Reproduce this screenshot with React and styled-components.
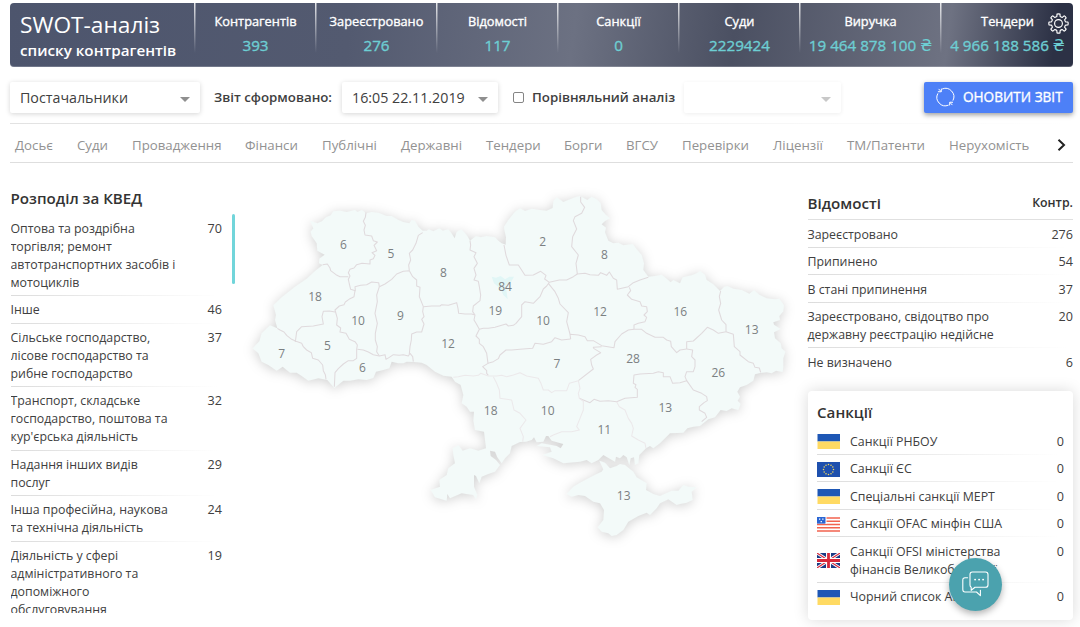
import React from "react";
import styled, { createGlobalStyle, css } from "styled-components";

const GlobalStyle = createGlobalStyle`
  *, *::before, *::after { box-sizing: border-box; }
  html, body { margin: 0; height: 100%; overflow: hidden; background: #fff; }
  body {
    font-family: "Open Sans", "Noto Sans", sans-serif;
    font-size: 12.35px;
    line-height: 18px;
    color: #404040;
  }
`;

const Page = styled.div`
  width: 1080px;
  height: 627px;
  padding: 3px 7px 0 10px;
  overflow: hidden;
  position: relative;
`;

/* Open Sans has no 500 cut installed, so a hairline stroke thickens the regular one. */
const mediumWeight = css`
  font-weight: 400;
  -webkit-text-stroke: 0.35px currentColor;
`;

const Header = styled.header`
  position: relative;
  display: flex;
  width: 1063px;
  height: 64px;
  border-radius: 4px;
  color: #fff;
  background: linear-gradient(97deg, #4d556d 0%, #535a70 32%, #6c7182 53%, #4b5062 68%, #6e7282 88%, #2c3145 98%);
  box-shadow: inset 0 -1px 0 rgba(255, 255, 255, 0.2);
`;

const HeaderTitle = styled.div`
  width: 184px;
  padding: 8px 0 0 10px;
  white-space: nowrap;
`;

const Title = styled.h1`
  margin: 0;
  font-size: 22.7px;
  line-height: 28px;
  font-weight: 400;
`;

const Subtitle = styled.div`
  font-size: 15.2px;
  line-height: 22px;
  font-weight: 600;
`;

const Stat = styled.div`
  width: ${(p) => p.$width}px;
  padding: 9px 0 0 2px;
  text-align: center;
  white-space: nowrap;
  background: linear-gradient(180deg, rgba(255, 255, 255, 0.85), rgba(255, 255, 255, 0)) left top / 1.5px 50px no-repeat;
`;

const StatLabel = styled.div`
  font-size: 12.8px;
  line-height: 19px;
  ${mediumWeight}
`;

const StatValue = styled.div`
  margin-top: 3px;
  font-size: 15.2px;
  line-height: 22px;
  color: #6dced3;
  ${mediumWeight}
`;

const Currency = styled.span`
  font: 400 15.5px/20px "DejaVu Sans", sans-serif;
  -webkit-text-stroke: 0;
`;

const SettingsButton = styled.button`
  position: absolute;
  right: 4px;
  top: 10px;
  width: 21px;
  height: 21px;
  padding: 0;
  border: 0;
  background: none;
  svg { display: block; }
`;

const Toolbar = styled.div`
  display: flex;
  align-items: center;
  width: 1063px;
  height: 57px;
  padding-top: 3px;
  background: linear-gradient(90deg, #e2e2e2, #fff) left bottom / 100% 1px no-repeat;
`;

const Select = styled.div`
  display: flex;
  align-items: center;
  justify-content: space-between;
  width: ${(p) => p.$width}px;
  height: 31px;
  padding: 2px 10px 0 10px;
  border-radius: 2px;
  background: #fff;
  font-size: 14.25px;
  box-shadow: ${(p) => (p.$muted ? "0 1px 4px rgba(0,0,0,.07)" : "0 1px 5px rgba(0,0,0,.17)")};
`;

const Caret = styled.span`
  width: 0;
  height: 0;
  margin-top: 2px;
  border: 5px solid transparent;
  border-top-color: ${(p) => (p.$muted ? "#c8c8c8" : "#8f8f8f")};
  border-bottom: 0;
`;

const ToolbarLabel = styled.span`
  font-weight: 600;
  font-size: 13.3px;
  white-space: nowrap;
  width: ${(p) => p.$width}px;
  margin-left: ${(p) => p.$gap}px;
`;

const Checkbox = styled.span`
  width: 11px;
  height: 11px;
  margin-left: 15px;
  border: 1px solid #858585;
  border-radius: 2px;
`;

const RefreshButton = styled.button`
  display: flex;
  align-items: center;
  gap: 8px;
  width: 149px;
  height: 31px;
  margin-left: auto;
  padding: 0 0 0 12px;
  border: 0;
  border-radius: 2px;
  color: #fff;
  background: #4d80f7;
  font: 400 13.6px/20px "Open Sans", sans-serif;
  ${mediumWeight}
  white-space: nowrap;
  box-shadow: 0 2px 5px rgba(0, 0, 0, 0.38);
`;

const Tabs = styled.nav`
  display: flex;
  align-items: center;
  width: 1063px;
  height: 39px;
  padding: 4px 7px 0 5px;
  border-bottom: 1px solid #dedede;
  color: #929292;
  font-size: 13.25px;
  white-space: nowrap;
`;

const Tab = styled.span`
  width: ${(p) => p.$width}px;
`;

const NextTabs = styled.span`
  margin-left: auto;
  height: 12px;
  svg { display: block; }
`;

const Content = styled.main`
  display: grid;
  grid-template-columns: 230px 567.5px 265.5px;
  height: 464px;
`;

const PanelTitle = styled.h2`
  margin: 0;
  font-size: 15.15px;
  line-height: 20px;
  font-weight: 600;
  color: #333;
`;

const Kved = styled.section`
  padding: 25px 0 0 0.5px;
`;

const KvedScroll = styled.div`
  display: flex;
  height: 398.5px;
  margin-top: 6px;
  overflow: hidden;
`;

const KvedList = styled.div`
  width: 221px;
`;

const Scrollbar = styled.div`
  width: 3px;
  height: 69.5px;
  border-radius: 2px;
  background: #71d5da;
`;

const rowLine = css`
  background: linear-gradient(90deg, #dcdcdc, #fff 98%) left bottom / 100% 1px no-repeat;
`;

const KvedRow = styled.div`
  display: flex;
  justify-content: space-between;
  width: 211.5px;
  padding: ${(p) => (p.$first ? "5.6px" : "5.1px")} 0 4.45px;
  ${rowLine}
`;

const RowName = styled.span`
  white-space: pre-line;
`;

const Count = styled.span`
  font-size: 12.6px;
`;

const MapArea = styled.section`
  padding-top: 17px;
  svg { display: block; overflow: visible; }
`;

const Region = styled.path`
  fill: #f3faf9;
`;

const Border = styled.path`
  fill: none;
  stroke: ${(p) => (p.$faint ? "#ece9eb" : "#e0dadd")};
  stroke-width: 3.2;
  stroke-linejoin: round;
`;

const MapLabel = styled.text`
  font: 36px "Open Sans", sans-serif;
  fill: #7b8082;
  text-anchor: middle;
`;

const Side = styled.aside`
  padding-top: 25.5px;
`;

const InfoHead = styled.div`
  display: flex;
  align-items: center;
  justify-content: space-between;
  height: 31.5px;
  padding-bottom: 2px;
  border-bottom: 1px solid #e0e0e0;
  font-weight: 600;
  color: #333;
`;

const InfoRows = styled.div`
  padding-top: 0.5px;
`;

const InfoRow = styled.div`
  display: flex;
  justify-content: space-between;
  padding: 5.1px 0 4.4px;
  ${(p) => !p.$last && rowLine}
`;

const SanctionsCard = styled.div`
  height: 229px;
  margin-top: 15.5px;
  padding: 10.4px 9px 0 9.5px;
  border-radius: 4px;
  background: #fff;
  box-shadow: 0 0 15px rgba(0, 0, 0, 0.15);
`;

const SanctionRows = styled.div`
  margin-top: 5.6px;
`;

const SanctionRow = styled.div`
  display: flex;
  align-items: center;
  padding: 5.35px 0 4.15px;
  ${(p) => !p.$last && rowLine}
  svg { display: block; flex: none; }
`;

const SanctionName = styled.span`
  flex: 1;
  margin-left: 10px;
  white-space: pre-line;
`;

const SanctionCount = styled(Count)`
  align-self: flex-start;
`;

const ChatButton = styled.button`
  position: absolute;
  left: 949px;
  top: 558px;
  display: flex;
  align-items: center;
  justify-content: center;
  width: 53px;
  height: 53px;
  padding: 0 0 2px;
  border: 0;
  border-radius: 50%;
  background: #4ba2ae;
  box-shadow: 0 3px 7px rgba(0, 0, 0, 0.3);
`;

const stats = [
  ["Контрагентів", "393", 121],
  ["Зареєстровано", "276", 121],
  ["Відомості", "117", 121],
  ["Санкції", "0", 121],
  ["Суди", "2229424", 121],
  ["Виручка", "19 464 878 100", 141, true],
  ["Тендери", "4 966 188 586", 133, true],
];

const tabs = [
  ["Досьє", 62], ["Суди", 55], ["Провадження", 113], ["Фінанси", 77], ["Публічні", 79],
  ["Державні", 85], ["Тендери", 78], ["Борги", 62], ["ВГСУ", 56], ["Перевірки", 91],
  ["Ліцензії", 74], ["ТМ/Патенти", 102], ["Нерухомість", 84],
];

const kved = [
  ["Оптова та роздрібна\nторгівля; ремонт\nавтотранспортних засобів і\nмотоциклів", 70],
  ["Інше", 46],
  ["Сільське господарство,\nлісове господарство та\nрибне господарство", 37],
  ["Транспорт, складське\nгосподарство, поштова та\nкур'єрська діяльність", 32],
  ["Надання інших видів\nпослуг", 29],
  ["Інша професійна, наукова\nта технічна діяльність", 24],
  ["Діяльність у сфері\nадміністративного та\nдопоміжного\nобслуговування", 19],
];

const info = [
  ["Зареєстровано", 276],
  ["Припинено", 54],
  ["В стані припинення", 37],
  ["Зареєстровано, свідоцтво про\nдержавну реєстрацію недійсне", 20],
  ["Не визначено", 6],
];

const sanctions = [
  ["ua", "Санкції РНБОУ"],
  ["eu", "Санкції ЄС"],
  ["ua", "Спеціальні санкції МЕРТ"],
  ["us", "Санкції OFAC мінфін США"],
  ["gb", "Санкції OFSI міністерства\nфінансів Великобританії"],
  ["ua", "Чорний список АМКУ"],
];

/* Map geometry: three units per pixel. */
const mainland =
  "M210 122 232 130 246 124 258 112 272 106 280 94 300 92 320 96 345 90 352 96 366 90 378 100 395 96 415 98 440 108 455 108 475 120 490 126 508 130 515 120 525 122 535 140 548 152 560 152 566 148 580 154 598 145 608 152 625 148 636 162 644 175 650 156 664 148 672 156 682 168 690 182 708 168 722 172 740 168 765 172 775 182 785 190 797 194 798 172 793 150 792 140 805 120 825 95 840 85 855 93 875 86 900 90 920 92 938 84 940 64 950 52 970 66 990 58 1005 52 1020 48 1042 60 1055 50 1070 58 1082 70 1085 90 1098 105 1110 115 1095 123 1085 133 1098 143 1095 157 1105 182 1120 190 1135 188 1150 196 1178 192 1192 210 1205 225 1212 250 1210 270 1225 290 1245 288 1265 284 1280 296 1292 307 1300 300 1320 310 1328 292 1355 286 1370 280 1380 273 1395 284 1400 300 1420 313 1440 333 1452 321 1462 318 1480 326 1505 330 1528 341 1542 331 1558 344 1580 355 1605 358 1618 356 1632 376 1630 394 1618 408 1620 420 1600 427 1602 434 1622 447 1602 457 1605 475 1622 490 1625 505 1636 515 1630 535 1630 560 1628 576 1608 572 1595 580 1580 577 1560 579 1545 583 1540 602 1520 615 1500 622 1492 635 1500 650 1493 662 1502 672 1495 690 1475 685 1460 693 1442 690 1425 712 1405 718 1380 738 1360 740 1342 745 1330 758 1290 760 1260 790 1240 805 1230 798 1218 805 1198 825 1195 850 1185 855 1182 832 1172 835 1168 855 1160 832 1150 825 1140 835 1128 830 1125 845 1112 838 1090 825 1075 840 1055 850 1040 840 1020 845 970 850 940 835 908 825 935 815 930 802 890 798 905 790 950 798 962 805 970 792 935 782 925 768 918 768 910 785 890 787 882 772 875 780 858 785 840 786 815 798 810 820 795 835 785 850 772 832 765 815 750 812 752 828 768 840 780 855 765 875 745 882 725 890 718 910 708 888 702 885 702 920 712 945 708 958 700 945 665 940 630 955 622 942 620 962 585 952 572 930 600 920 598 900 620 885 625 865 645 850 640 825 638 805 655 795 668 812 690 805 715 812 738 805 735 780 732 755 705 750 700 722 702 695 690 695 680 680 665 670 670 645 662 615 645 605 635 590 610 587 585 575 560 555 545 548 522 546 500 545 490 550 475 550 455 545 448 565 430 570 408 575 400 594 380 600 355 598 330 602 310 602 283 624 262 600 235 595 205 602 185 588 170 578 150 578 128 560 110 572 85 555 65 545 55 520 38 505 58 484 65 460 90 436 112 445 105 420 108 405 100 376 125 352 165 320 200 296 225 273 248 255 237 250 238 236 254 224 232 212 230 190 215 168 212 155 220 145Z";

const crimea =
  "M980 942 1000 920 1020 908 1045 895 1070 882 1085 875 1090 868 1078 842 1095 848 1110 865 1130 858 1140 852 1155 855 1180 875 1190 892 1220 910 1218 930 1240 942 1260 948 1295 932 1315 932 1330 915 1345 920 1370 922 1355 935 1358 960 1340 968 1320 972 1310 975 1285 958 1260 970 1250 985 1230 1005 1220 998 1195 1008 1165 1025 1150 1050 1130 1065 1115 1068 1105 1060 1085 1055 1073 1042 1090 1020 1092 990 1080 970 1060 965 1035 948 1015 945 995 950Z";

const kyivCity = "M755 290 768 293 782 288 795 298 808 290 822 290 812 308 797 316 803 358 790 345 780 325 762 310Z";

const borders = [
  "M378 98 376 112 370 124 376 136 372 150 375 165 395 168 400 182 412 186 402 196 410 212 396 218 405 226 400 236 390 240 390 252 366 250 350 254 342 264 330 268 325 278 330 288 325 298 328 312 332 328 346 332 345 320 362 316 380 314 395 306 416 308 418 320",
  "M248 254 262 252 270 264 272 272 288 284 300 290 325 290",
  "M345 332 342 350 330 356 316 366 312 374 298 378 285 390 292 415 290 435 302 444 300 456 318 460 328 478 345 485 352 495 350 508 350 535 340 542 325 542 310 552 295 566 285 578 284 600 283 620",
  "M285 396 268 393 250 394 246 410 250 432 220 438 185 440 170 455 166 486",
  "M112 445 120 450 132 456 140 466 155 478 168 484 185 490 190 500 200 510 214 518 218 535 235 540 248 555 250 572 256 584 258 598",
  "M352 508 370 510 385 516 400 524 418 528 435 524 438 538 448 532 460 524 478 526 490 524 505 528 510 520 518 530 520 545",
  "M418 320 410 345 412 365 405 400 412 430 406 460 406 480 412 500 410 515 418 528",
  "M418 320 435 312 455 298 470 282 490 274 508 272 518 290 530 300 530 318 540 322 538 350 550 380 548 395 552 410 545 418 552 432 545 456 530 456 515 462 514 480 510 500 508 522",
  "M548 158 535 166 528 190 518 210 508 220 512 240 506 255 508 272",
  "M550 380 575 378 600 378 605 374 625 376 650 368 654 385 656 400 675 402 695 402 705 405",
  "M690 182 692 195 690 210 708 218 702 230 712 250 702 265 708 285 702 300 715 304 718 320 722 345 720 362 700 378 698 395 705 405 702 420 708 430 718 448 708 468 718 478 718 490 730 500 740 520 744 550 728 560 740 572 740 580 745 586",
  "M718 448 730 445 745 445 765 442 785 436 798 432 805 438 820 436 828 430 845 410 845 375 855 365 880 370 900 350 910 327 920 318 928 307",
  "M744 550 760 545 775 536 780 525 798 510 815 510 840 508 878 505 885 490 910 493 935 485 945 473 965 480 992 477",
  "M1015 602 1060 567 1055 555 1052 538 1070 525 1082 518 1062 506 1060 502 1085 500",
  "M992 477 990 463 1015 465 1035 470 1042 482 1060 482 1085 497 1122 503 1125 485 1145 462 1165 450 1182 448",
  "M925 310 945 335 955 355 960 372 985 398 980 425 990 462",
  "M792 195 798 226 808 255 835 255 855 286 880 285 902 274 918 286 914 297 928 307 958 300 980 300 1000 290 1012 282",
  "M1022 50 1022 66 1034 82 1025 100 1005 110 1000 122 1010 147 998 170 995 200 1015 225 1008 250 1012 282 1035 280 1050 284 1075 286 1082 278 1100 286 1108 276 1120 295 1130 300 1132 328 1165 320 1180 308 1200 300 1225 292",
  "M1168 322 1172 332 1162 345 1175 358 1200 365 1205 378 1220 380 1222 395 1212 405 1220 412 1215 425 1195 430 1182 435 1182 448 1205 448 1220 460 1245 472 1270 472 1280 480 1292 484 1294 500 1310 518 1320 510 1340 507",
  "M1340 507 1340 485 1360 483 1385 460 1402 442 1420 450 1435 460 1458 455 1458 434 1445 420 1436 390 1442 370 1438 350 1442 333",
  "M1458 455 1480 463 1483 500 1500 515 1500 525 1525 545 1540 550 1545 562 1558 564 1562 577",
  "M1340 507 1358 510 1355 530 1365 540 1365 560 1360 575 1340 575 1335 590 1340 602 1320 608 1298 610 1290 590 1270 590 1270 578 1255 575 1240 580 1200 582 1182 585 1180 610 1188 614 1185 622 1192 628 1192 652 1155 655 1130 665 1105 662 1080 664 1062 658 1050 668 1030 660 1018 655",
  "M1340 602 1360 630 1385 640 1400 650 1402 662 1392 668 1378 680 1378 690 1395 700 1400 712 1385 725",
];

const faintBorders = [
  "M640 592 655 590 675 586 700 588 715 586 722 580 745 588 770 588 785 586 800 590 820 585 840 578 860 588 895 595 902 608 910 630 925 630 935 638 945 632 980 632 988 610 1015 602 1020 625 1015 640 1018 655 1030 664 1030 690 1020 715 1010 740 1018 750 995 755 965 755 940 765 930 770",
  "M760 590 770 610 778 630 780 655 815 660 822 690 840 700 858 720 840 745 850 770 848 785",
  "M1130 665 1138 680 1155 690 1165 715 1175 730 1180 745 1175 768 1195 780 1215 790 1218 805",
];

const labels = [
  [310, 207, 6], [453, 235, 5], [610, 292, 8], [225, 363, 18], [354, 434, 10], [481, 419, 9],
  [262, 511, 5], [125, 533, 7], [367, 576, 6], [624, 505, 12], [795, 334, 84], [766, 406, 19],
  [908, 199, 2], [1093, 236, 8], [909, 435, 10], [1080, 407, 12], [1321, 407, 16], [1535, 463, 13],
  [951, 563, 7], [1179, 549, 28], [1435, 592, 26], [752, 706, 18], [923, 706, 10], [1093, 762, 11],
  [1276, 697, 13], [1151, 961, 13],
];

function UkraineMap() {
  return (
    <svg width="560" height="370" viewBox="0 0 1680 1110">
      <g style={{ filter: "drop-shadow(0 5px 18px rgba(0,0,0,.18))" }}>
        <Region d={mainland} />
        <Region d={crimea} />
      </g>
      <path d={kyivCity} fill="#e1f6f6" />
      {borders.map((d) => <Border key={d} d={d} />)}
      {faintBorders.map((d) => <Border key={d} d={d} $faint />)}
      {labels.map(([x, y, n]) => <MapLabel key={`${x}-${y}`} x={x} y={y}>{n}</MapLabel>)}
    </svg>
  );
}

function GearIcon() {
  const teeth = [];
  for (let i = 0; i < 8; i++) {
    const at = (deg, r) => {
      const a = ((i * 45 + deg) * Math.PI) / 180;
      return `${(10.5 + r * Math.sin(a)).toFixed(2)} ${(10.5 - r * Math.cos(a)).toFixed(2)}`;
    };
    teeth.push(`${at(-13, 7.3)}L${at(-9, 9.5)}Q${at(0, 10)} ${at(9, 9.5)}L${at(13, 7.3)}Q${at(22.5, 6.6)} ${at(32, 7.3)}`);
  }
  return (
    <svg width="21" height="21" viewBox="0 0 21 21" fill="none" stroke="#fff" strokeWidth="1.15" strokeLinejoin="round">
      <path d={`M${teeth.join("L")}Z`} />
      <circle cx="10.5" cy="10.5" r="3.9" />
    </svg>
  );
}

function RefreshIcon() {
  return (
    <svg width="19" height="20" viewBox="0 0 19 20" fill="none" stroke="#fff" strokeWidth="1">
      <path d="M6.2 2A8.4 8.4 0 0 1 16.9 13.6" />
      <path d="M12.6 18.1A8.4 8.4 0 0 1 1.9 6.4" />
      <path d="M1.9 4.7 5.2 4.8 5.4 1.6M17 15.3 13.8 15.2 13.6 18.4" />
      <path d="M2.6 1.9 5.2 4.7M16.4 18.1 13.8 15.3" />
    </svg>
  );
}

function ChatIcon() {
  return (
    <svg width="27" height="26" viewBox="0 0 27 26" fill="none" stroke="#fff" strokeWidth="1.1" strokeLinejoin="round" strokeLinecap="round">
      <path d="M10.3 1H23.5Q26 1 26 3.5V14Q26 16.3 23.5 16.3H13L9.2 19.3V16.2Q8 15.6 8 14V3.5Q8 1 10.3 1Z" />
      <path d="M5.6 6.7H3Q.8 6.7.8 9V18.6Q.8 21 3 21H14.5L18.4 24.6V19.2" />
      <path d="M13 8.6h.2M17 8.6h.2M21 8.6h.2" strokeWidth="1.7" />
    </svg>
  );
}

function Flag({ code }) {
  if (code === "ua") {
    return (
      <svg width="23" height="15" viewBox="0 0 23 15">
        <path fill="#1e57b5" d="M.5 0h22.5v7.5H.5z" />
        <path fill="#ffda63" d="M.5 7.5h22.5V15H.5z" />
      </svg>
    );
  }
  if (code === "eu") {
    return (
      <svg width="23" height="15" viewBox="0 0 23 15">
        <path fill="#1e50ae" d="M0 0h23v15H0z" />
        {[...Array(12)].map((_, i) => (
          <circle key={i} r=".75" fill="#f4d95b" cx={11.5 + 5 * Math.sin((i * Math.PI) / 6)} cy={7.5 - 5 * Math.cos((i * Math.PI) / 6)} />
        ))}
      </svg>
    );
  }
  if (code === "us") {
    return (
      <svg width="23" height="15" viewBox="0 0 23 15">
        <path fill="#fff" d="M0 0h23v15H0z" />
        <path stroke="#f2634f" strokeWidth="1.4" d="M0 1h23M0 4.2h23M0 7.5h23M0 10.8h23M0 14h23" />
        <path fill="#fff" d="M8 0h1.5v7H8z" />
        <path fill="#2a66d3" d="M0 0h8.5v6.6H0z" />
        <path fill="#fff" d="M2 1.5h1.3v1.3H2zM5.2 1.5h1.3v1.3H5.2zM3.6 3.9h1.3v1.3H3.6z" />
      </svg>
    );
  }
  return (
    <svg width="23" height="15" viewBox="0 0 23 15">
      <path fill="#1b3a85" d="M0 0h23v15H0z" />
      <path stroke="#fff" strokeWidth="3" d="M0 0 23 15M23 0 0 15" />
      <path stroke="#d8293b" strokeWidth="1.1" d="M0 0 23 15M23 0 0 15" />
      <path stroke="#fff" strokeWidth="5" d="M11.5 0V15M0 7.5H23" />
      <path stroke="#d8293b" strokeWidth="2.8" d="M11.5 0V15M0 7.5H23" />
    </svg>
  );
}

export default function App() {
  return (
    <Page>
      <GlobalStyle />
      <Header>
        <HeaderTitle>
          <Title>SWOT-аналіз</Title>
          <Subtitle>списку контрагентів</Subtitle>
        </HeaderTitle>
        {stats.map(([label, value, width, money]) => (
          <Stat key={label} $width={width}>
            <StatLabel>{label}</StatLabel>
            <StatValue>{value}{money && <> <Currency>₴</Currency></>}</StatValue>
          </Stat>
        ))}
        <SettingsButton aria-label="Налаштування"><GearIcon /></SettingsButton>
      </Header>

      <Toolbar>
        <Select $width={190}>Постачальники<Caret /></Select>
        <ToolbarLabel $gap={14} $width={128}>Звіт сформовано:</ToolbarLabel>
        <Select $width={156}>16:05 22.11.2019<Caret /></Select>
        <Checkbox />
        <ToolbarLabel $gap={8} $width={152}>Порівняльний аналіз</ToolbarLabel>
        <Select $width={157} $muted><span /><Caret $muted /></Select>
        <RefreshButton><RefreshIcon />ОНОВИТИ ЗВІТ</RefreshButton>
      </Toolbar>

      <Tabs>
        {tabs.map(([name, width]) => <Tab key={name} $width={width}>{name}</Tab>)}
        <NextTabs>
          <svg width="9" height="12" viewBox="0 0 9 12" fill="none" stroke="#222" strokeWidth="2">
            <path d="M1.5 .8 7 6 1.5 11.2" />
          </svg>
        </NextTabs>
      </Tabs>

      <Content>
        <Kved>
          <PanelTitle>Розподіл за КВЕД</PanelTitle>
          <KvedScroll>
            <KvedList>
              {kved.map(([name, count], i) => (
                <KvedRow key={name} $first={i === 0}>
                  <RowName>{name}</RowName>
                  <Count>{count}</Count>
                </KvedRow>
              ))}
            </KvedList>
            <Scrollbar />
          </KvedScroll>
        </Kved>

        <MapArea><UkraineMap /></MapArea>

        <Side>
          <InfoHead><PanelTitle>Відомості</PanelTitle>Контр.</InfoHead>
          <InfoRows>
            {info.map(([name, count], i) => (
              <InfoRow key={name} $last={i === info.length - 1}>
                <RowName>{name}</RowName>
                <Count>{count}</Count>
              </InfoRow>
            ))}
          </InfoRows>
          <SanctionsCard>
            <PanelTitle>Санкції</PanelTitle>
            <SanctionRows>
              {sanctions.map(([code, name], i) => (
                <SanctionRow key={name} $last={i === sanctions.length - 1}>
                  <Flag code={code} />
                  <SanctionName>{name}</SanctionName>
                  <SanctionCount>0</SanctionCount>
                </SanctionRow>
              ))}
            </SanctionRows>
          </SanctionsCard>
        </Side>
      </Content>

      <ChatButton aria-label="Чат"><ChatIcon /></ChatButton>
    </Page>
  );
}
